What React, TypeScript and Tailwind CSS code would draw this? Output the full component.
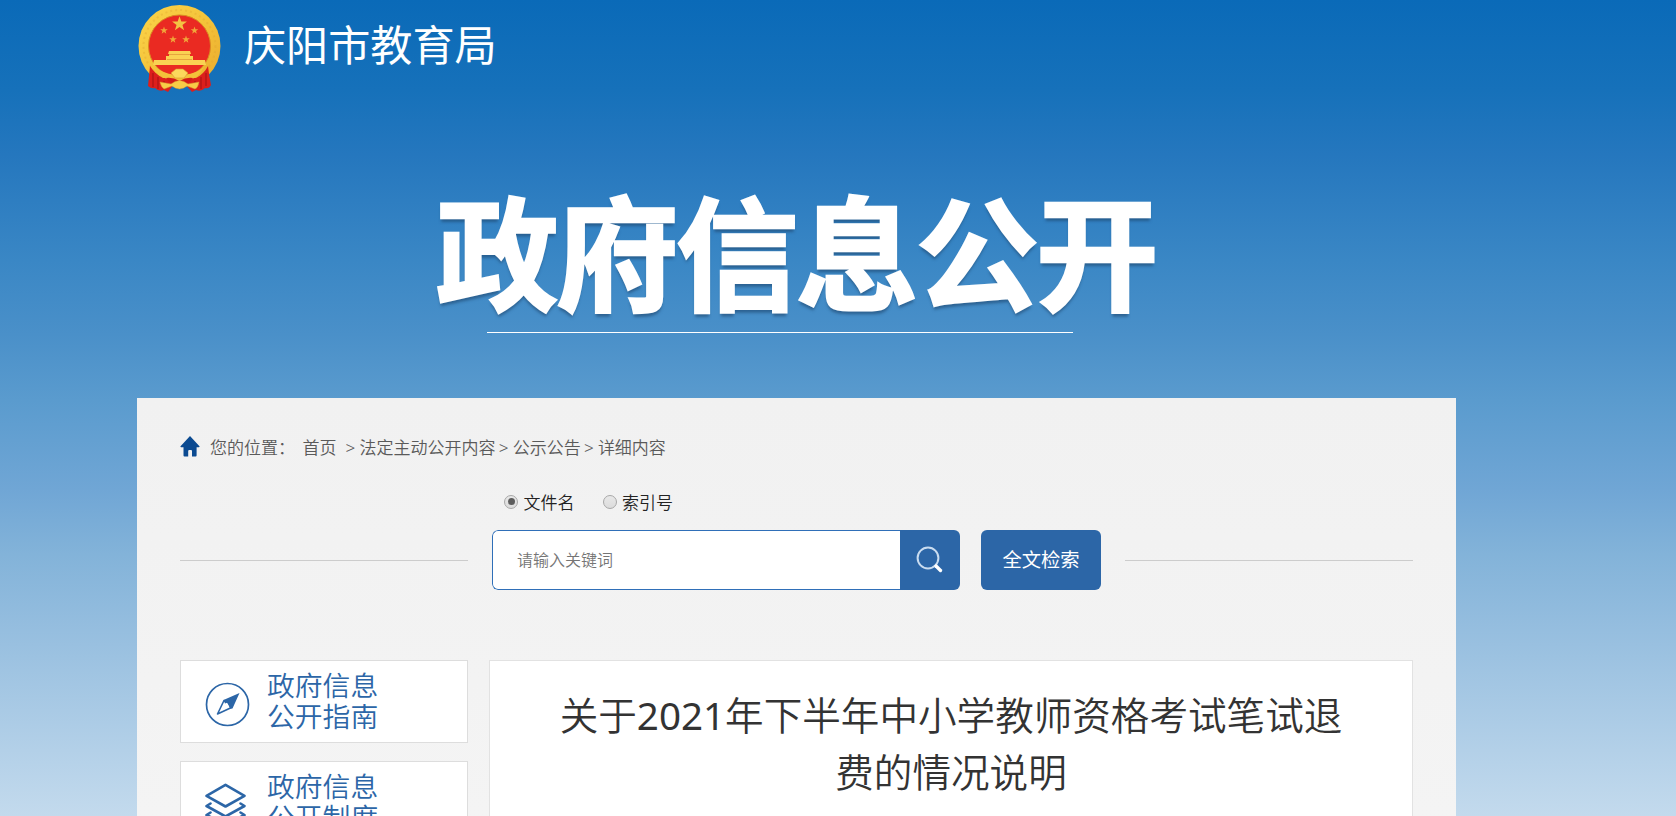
import type { ReactNode } from "react";

interface SideCardProps {
  icon: ReactNode;
  lines: string[];
}

const crumbs = ["法定主动公开内容", "公示公告", "详细内容"];

const star = (cx: number, cy: number, r: number) =>
  Array.from({ length: 10 }, (_, i) => {
    const radius = i % 2 ? r * 0.4 : r;
    const a = -Math.PI / 2 + (i * Math.PI) / 5;
    return `${cx + radius * Math.cos(a)},${cy + radius * Math.sin(a)}`;
  }).join(" ");

const Emblem = () => (
  <svg width="84" height="88" viewBox="0 0 84 88" className="shrink-0">
    <defs>
      <linearGradient id="gold" x1="0" y1="0" x2="1" y2="1">
        <stop offset="0" stopColor="#fbd54a" />
        <stop offset="0.5" stopColor="#f4c33a" />
        <stop offset="1" stopColor="#e9a92c" />
      </linearGradient>
    </defs>
    <circle cx="41.5" cy="41" r="41" fill="url(#gold)" />
    <circle cx="41.5" cy="41" r="36" fill="none" stroke="#dfa22d" strokeWidth="2" strokeDasharray="2 3" opacity="0.35" />
    <circle cx="41.5" cy="41" r="31" fill="#ea2a22" stroke="#d98a22" strokeWidth="1" />
    <polygon points={star(41.5, 19, 7.8)} fill="#f3c443" />
    <polygon points={star(26, 25.5, 4)} fill="#f0a63a" />
    <polygon points={star(56.5, 25.5, 4)} fill="#f0a63a" />
    <polygon points={star(35, 34.5, 4)} fill="#f0a63a" />
    <polygon points={star(48, 34.5, 4)} fill="#f0a63a" />
    <path d="M31 46h21l1 3h-1v2h3v4h12l1 5H15l1-5h12v-4h3v-2h-1z" fill="#fad253" />
    <path d="M31 49.5h21M29 54.5h25" stroke="#dc9435" strokeWidth="0.7" />
    <path d="M12 61 Q11 71 10 81 Q13 84 17 83 Q21 87 26 85 L30 87 L36 79 H47 L54 87 L58 85 Q63 87 67 83 Q71 84 73 80 Q71 71 70 61 Q66 69 58 73 H25 Q17 69 12 61Z" fill="#dc1f1c" />
    <path d="M15 68v14M20 72v12M26 76v8M57 76v8M63 72v12M68 68v13" stroke="#ad1515" strokeWidth="1.2" />
    <path d="M17 62 Q27 69 35 69.5 L39 65 H44 L48 69.5 Q57 69 66 62 L60 71 Q50 77 41.5 76 Q33 77 23 71Z" fill="#f3c13a" />
    <path d="M33 68 L38 64 H45 L50 68 L46 73 H37Z" fill="#fcd85c" stroke="#d9972d" strokeWidth="0.6" />
    <path d="M28 73 Q35 72 41.5 76 Q48 72 55 73 L52 77 L41.5 80 L31 77Z" fill="#d21b19" />
    <path d="M22 77 L33 79 Q41.5 72 50 79 L61 77 Q60 83 57 84 L49 81 Q41.5 87 34 81 L26 84 Q23 82 22 77Z" fill="#f8cc47" stroke="#d9972d" strokeWidth="0.5" />
  </svg>
);

const HomeIcon = () => (
  <svg width="20" height="21" viewBox="0 0 20 21" className="relative -top-[1.5px] shrink-0">
    <path d="M10 0 L19.7 10.5 L19 11.2 H16.6 V19.5 Q16.6 20.5 15.6 20.5 H12 V15 Q12 14 11 14 H9.2 Q8.2 14 8.2 15 V20.5 H4.5 Q3.5 20.5 3.5 19.5 V11.2 H1 L0.3 10.5Z" fill="#0b4a91" />
  </svg>
);

const SearchIcon = () => (
  <svg width="28" height="28" viewBox="0 0 28 28" fill="none">
    <circle cx="12" cy="12" r="10.4" stroke="#c9dcf0" strokeWidth="2" />
    <path d="M20 20 L24.5 24.5" stroke="#fff" strokeWidth="3.4" strokeLinecap="round" />
  </svg>
);

const CompassIcon = () => (
  <svg width="46" height="46" viewBox="0 0 46 46" fill="none">
    <circle cx="22.5" cy="23.5" r="21" stroke="#2c66a7" strokeWidth="1.7" />
    <path d="M12.5 33 L19 19.5 L22.5 21 L26.5 26.5 Z" stroke="#2c66a7" strokeWidth="1.6" strokeLinejoin="round" />
    <path d="M34.5 12 L18.5 19 L20 22.5 L22.5 21.5 L25 27.5 L27.5 27.5 Z" fill="#2c66a7" />
  </svg>
);

const LayersIcon = () => (
  <svg width="42" height="44" viewBox="0 0 42 44" fill="none" stroke="#2c66a7" strokeWidth="2.6" strokeLinejoin="round" strokeLinecap="round">
    <path d="M20.5 2.8 L39.5 13.8 L20.5 24.5 L1.5 13.8Z" />
    <path d="M5.5 21.5 L1.5 24 L20.5 34.5 L39.5 24 L35.5 21.5" />
    <path d="M5.5 30.5 L1.5 33 L20.5 42.5 L39.5 33 L35.5 30.5" />
  </svg>
);

const SideCard = ({ icon, lines }: SideCardProps) => (
  <div className="flex h-[83px] border border-[#ddd] bg-white pt-[9px] pl-6">
    <div className="flex w-[62px] pt-[11px]">{icon}</div>
    <p className="text-[27.8px] leading-[31px] font-[350] text-[#2c66a7]">
      {lines.map((line) => (
        <span key={line} className="block">{line}</span>
      ))}
    </p>
  </div>
);

const Radio = ({ label, checked }: { label: string; checked?: boolean }) => (
  <label className="flex items-center gap-[5.5px]">
    <span className="flex h-[14px] w-[14px] items-center justify-center rounded-full border border-[#a8a8a8] bg-linear-to-b from-[#e8e8e8] to-[#dcdcdc]">
      {checked && <span className="h-[7px] w-[7px] rounded-full bg-[#5c5c5c]" />}
    </span>
    <span className="pt-[3px] leading-6">{label}</span>
  </label>
);

export default function App() {
  return (
    <div className="h-[816px] overflow-hidden bg-[linear-gradient(180deg,#0a6ab8_0%,#1671ba_11%,#2577be_19%,#3a87c5_32%,#4a90c9_41%,#5a9bce_49%,#70a6d5_60%,#83b3d9_68%,#99c0e0_79%,#c3daed_100%)] pl-[137px] font-['Noto_Sans','Noto_Sans_CJK_SC',sans-serif]">
      <div className="w-[1319px]">
        <header className="flex h-[172px] items-start pt-[5px] pl-px">
          <Emblem />
          <span className="ml-[22px] pt-[7px] text-[42.1px] leading-[65px] text-white">庆阳市教育局</span>
        </header>

        <h1 className="h-[160px] pt-[2px] pl-[299px] text-[122.5px] leading-[160px] font-bold tracking-[-2.5px] whitespace-nowrap text-white [-webkit-text-stroke:2.5px_white] [text-shadow:0_4px_3px_rgba(30,70,110,0.6)]">
          政府信息公开
        </h1>
        <div className="ml-[350px] h-px w-[586px] bg-white" />

        <main className="mt-[65px] h-[420px] bg-linear-to-b from-[#f1f1f1] to-[#f4f4f4] pr-[43px] pl-[43px]">
          <nav className="flex items-center pt-[38px] text-[17px] leading-6 font-[350] text-[#5a5a5a]">
            <HomeIcon />
            <span className="ml-[10px] w-[92.5px]">您的位置：</span>
            <span className="w-[43px]">首页</span>
            {crumbs.map((crumb) => (
              <span key={crumb} className="flex">
                <span className="w-[14px]">&gt;</span>
                <span className="mr-[3.2px]">{crumb}</span>
              </span>
            ))}
          </nav>

          <div className="mt-[28px] flex gap-7 pl-[324px] text-[17px] font-[350] text-[#222]">
            <Radio label="文件名" checked />
            <Radio label="索引号" />
          </div>

          <div className="mt-[15px] flex h-[60px] items-center">
            <div className="h-px w-72 bg-[#ccc]" />
            <div className="ml-6 flex h-[60px] w-[468px] overflow-hidden rounded-md">
              <input
                className="h-full w-[408px] rounded-l-md border border-r-0 border-[#2f6fb8] bg-white pl-6 text-[16px] font-[350] outline-none placeholder:text-[#757575]"
                placeholder="请输入关键词"
              />
              <button className="flex w-[60px] items-center justify-center bg-[#2c66a7]">
                <SearchIcon />
              </button>
            </div>
            <button className="ml-[21px] h-[60px] w-[120px] rounded-md bg-[#2c66a7] text-[19.3px] text-white">全文检索</button>
            <div className="ml-6 h-px w-72 bg-[#ccc]" />
          </div>

          <div className="mt-[70px] flex gap-[21px]">
            <aside className="flex w-72 flex-col gap-[18px]">
              <SideCard icon={<CompassIcon />} lines={["政府信息", "公开指南"]} />
              <SideCard icon={<LayersIcon />} lines={["政府信息", "公开制度"]} />
            </aside>
            <article className="h-[300px] w-[924px] border border-[#e2e2e2] bg-white px-[68px] pt-[26px]">
              <h2 className="text-center text-[38.6px] leading-[57px] font-[350] text-[#333]">
                关于<span className="font-normal">2021</span>年下半年中小学教师资格考试笔试退
                <br />
                费的情况说明
              </h2>
            </article>
          </div>
        </main>
      </div>
    </div>
  );
}
